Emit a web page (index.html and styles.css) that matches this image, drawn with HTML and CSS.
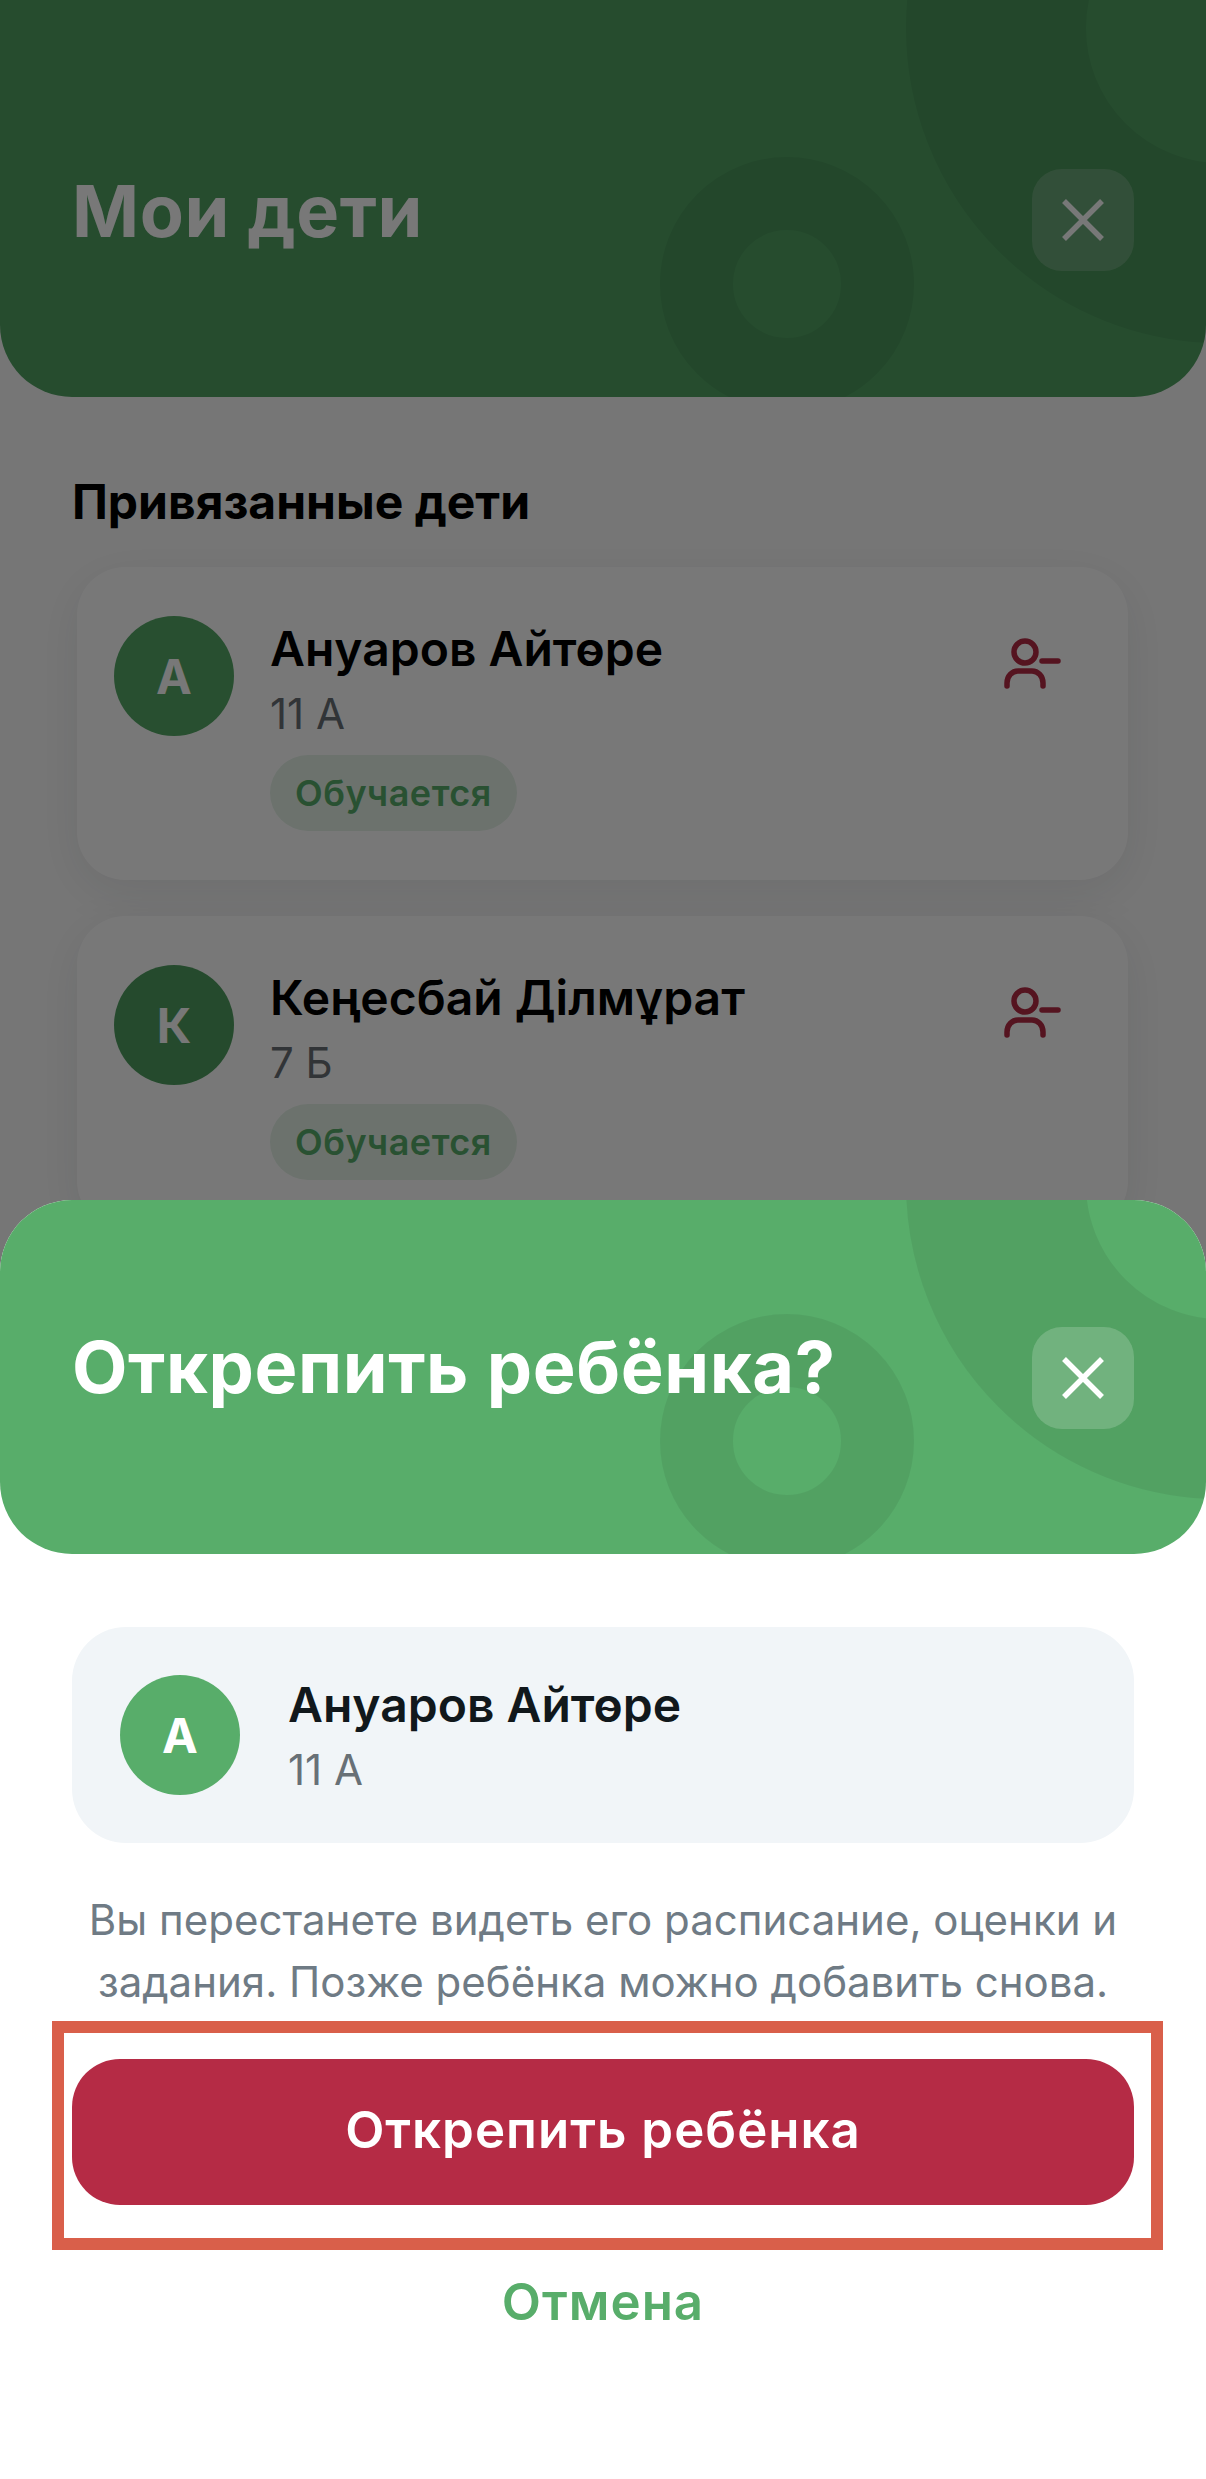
FILE: index.html
```html
<!DOCTYPE html>
<html lang="ru">
<head>
<meta charset="utf-8">
<title>Мои дети</title>
<link rel="stylesheet" href="styles.css">
</head>
<body>
<div class="screen">
  <header class="hero hero-page">
    <span class="ring ring-big"></span>
    <span class="ring ring-small"></span>
    <h1 class="hero-title">Мои дети</h1>
    <button class="close" aria-label="Закрыть">
      <svg class="close-icon" viewBox="0 0 42 42"><path d="M2 2 40 40M40 2 2 40"/></svg>
    </button>
  </header>
  <main class="content">
    <h2 class="section-title">Привязанные дети</h2>
    <article class="child-card">
      <div class="avatar avatar-first">А</div>
      <div class="child-info">
        <div class="child-name">Ануаров Айтөре</div>
        <div class="child-class">11 А</div>
        <span class="badge">Обучается</span>
      </div>
      <svg class="unlink" viewBox="0 0 60 56"><circle cx="24" cy="14" r="11"/><path d="M6 48V45C6 38 11 33 17 33H31C37 33 42 38 42 45V48M41 23H57"/></svg>
    </article>
    <article class="child-card">
      <div class="avatar avatar-second">К</div>
      <div class="child-info">
        <div class="child-name">Кеңесбай Ділмұрат</div>
        <div class="child-class">7 Б</div>
        <span class="badge">Обучается</span>
      </div>
      <svg class="unlink" viewBox="0 0 60 56"><circle cx="24" cy="14" r="11"/><path d="M6 48V45C6 38 11 33 17 33H31C37 33 42 38 42 45V48M41 23H57"/></svg>
    </article>
  </main>
  <div class="dim"></div>
  <section class="sheet">
    <header class="hero hero-sheet">
      <span class="ring ring-big"></span>
      <span class="ring ring-small"></span>
      <h2 class="hero-title">Открепить ребёнка?</h2>
      <button class="close" aria-label="Закрыть">
        <svg class="close-icon" viewBox="0 0 42 42"><path d="M2 2 40 40M40 2 2 40"/></svg>
      </button>
    </header>
    <div class="sheet-body">
      <div class="summary">
        <div class="avatar">А</div>
        <div class="summary-info">
          <div class="child-name">Ануаров Айтөре</div>
          <div class="child-class">11 А</div>
        </div>
      </div>
      <p class="note">Вы перестанете видеть его расписание, оценки и задания. Позже ребёнка можно добавить снова.</p>
      <div class="action">
        <button class="danger">Открепить ребёнка</button>
        <span class="frame"></span>
      </div>
      <button class="cancel">Отмена</button>
    </div>
  </section>
</div>
</body>
</html>
```
FILE: styles.css
```css
* { box-sizing: border-box; }
html, body { margin: 0; padding: 0; }
body { font-family: Inter, "Liberation Sans", sans-serif; background: #fff; }
button { font-family: inherit; border: 0; padding: 0; }

.screen {
  position: relative;
  width: 1206px;
  height: 2479px;
  overflow: hidden;
  background: #fbfbfb;
}

.hero {
  position: relative;
  overflow: hidden;
  display: flex;
  justify-content: space-between;
  background: #58ad6a;
  border-radius: 0 0 72px 72px;
  padding: 0 72px;
}
.hero-page { height: 397px; padding-top: 169px; background: #51a263; }
.hero-sheet { height: 354px; padding-top: 127px; border-radius: 72px; }

.ring { position: absolute; border-radius: 50%; border-style: solid; border-color: rgba(0, 0, 0, .065); }
.ring-big { width: 630px; height: 630px; border-width: 180px; left: 906px; }
.hero-page .ring-big { top: -287px; }
.hero-sheet .ring-big { top: -331px; }
.ring-small { width: 254px; height: 254px; border-width: 73px; left: 660px; bottom: -14px; }

.hero-title {
  position: relative;
  margin: 0;
  font-size: 72px;
  line-height: 78px;
  font-weight: 700;
  letter-spacing: .6px;
  color: #fff;
}
.hero-page .hero-title { margin-top: 3px; }
.hero-sheet .hero-title { margin-top: 1px; }

.close {
  position: relative;
  width: 102px;
  height: 102px;
  border-radius: 30px;
  background: rgba(255, 255, 255, .18);
  display: flex;
  align-items: center;
  justify-content: center;
}
.close-icon { width: 42px; height: 42px; fill: none; stroke: #fff; stroke-width: 5.5; }

.content { padding: 73px 78px 0 77px; }
.section-title { margin: 0 0 33px -5px; font-size: 48px; line-height: 64px; font-weight: 700; color: #000; }

.child-card {
  display: flex;
  gap: 36px;
  height: 313px;
  margin-bottom: 36px;
  padding: 49px 37px;
  border-radius: 48px;
  background: #fff;
  box-shadow: 0 12px 48px rgba(30, 40, 50, .08);
}
.avatar {
  flex: none;
  width: 120px;
  height: 120px;
  border-radius: 50%;
  background: #58ad6a;
  color: #fff;
  display: flex;
  align-items: center;
  justify-content: center;
  font-size: 48px;
  font-weight: 700;
}
.avatar-first { background: #55a866; }
.avatar-second { background: #4f9e60; }
.child-info { flex: 1; display: flex; flex-direction: column; align-items: flex-start; }
.child-name { font-size: 48px; line-height: 60px; font-weight: 600; color: #000; margin-top: 3px; }
.child-class { font-size: 42px; line-height: 56px; color: #687076; margin-top: 7px; }
.badge {
  margin-top: 13px;
  height: 76px;
  padding: 0 25px;
  border-radius: 38px;
  background: #e5f3e8;
  color: #58ad6a;
  font-size: 36px;
  line-height: 76px;
  font-weight: 600;
  letter-spacing: .5px;
}
.unlink {
  flex: none;
  width: 60px;
  height: 56px;
  margin: 22px 30px 0 0;
  fill: none;
  stroke: #b52b45;
  stroke-width: 5.5;
  stroke-linecap: round;
}

.dim { position: absolute; inset: 0; background: rgba(0, 0, 0, .53); }

.sheet {
  position: absolute;
  left: 0;
  right: 0;
  top: 1200px;
  bottom: 0;
  background: #fff;
  border-radius: 72px 72px 0 0;
}
.sheet-body { padding: 73px 72px 0; }

.summary {
  display: flex;
  align-items: center;
  gap: 48px;
  height: 216px;
  padding: 0 48px;
  border-radius: 54px;
  background: #f1f5f8;
}
.summary-info { padding-top: 3px; }
.summary .child-name { margin-top: 0; color: #11181c; }

.note {
  margin: 46px 0 0;
  text-align: center;
  font-size: 42px;
  line-height: 62px;
  color: #6f7b85;
}

.action { position: relative; margin-top: 46px; }
.danger {
  display: block;
  width: 100%;
  height: 146px;
  padding-bottom: 5px;
  border-radius: 48px;
  background: #b52b45;
  color: #fff;
  font-size: 51px;
  font-weight: 600;
  letter-spacing: 1px;
}
.frame {
  position: absolute;
  inset: -38px -29px -45px -20px;
  border: 12px solid #d95f4a;
}
.cancel {
  display: block;
  margin: 64px auto 0;
  background: none;
  color: #58ad6a;
  font-size: 51px;
  line-height: 66px;
  font-weight: 600;
  letter-spacing: 1px;
}
```
